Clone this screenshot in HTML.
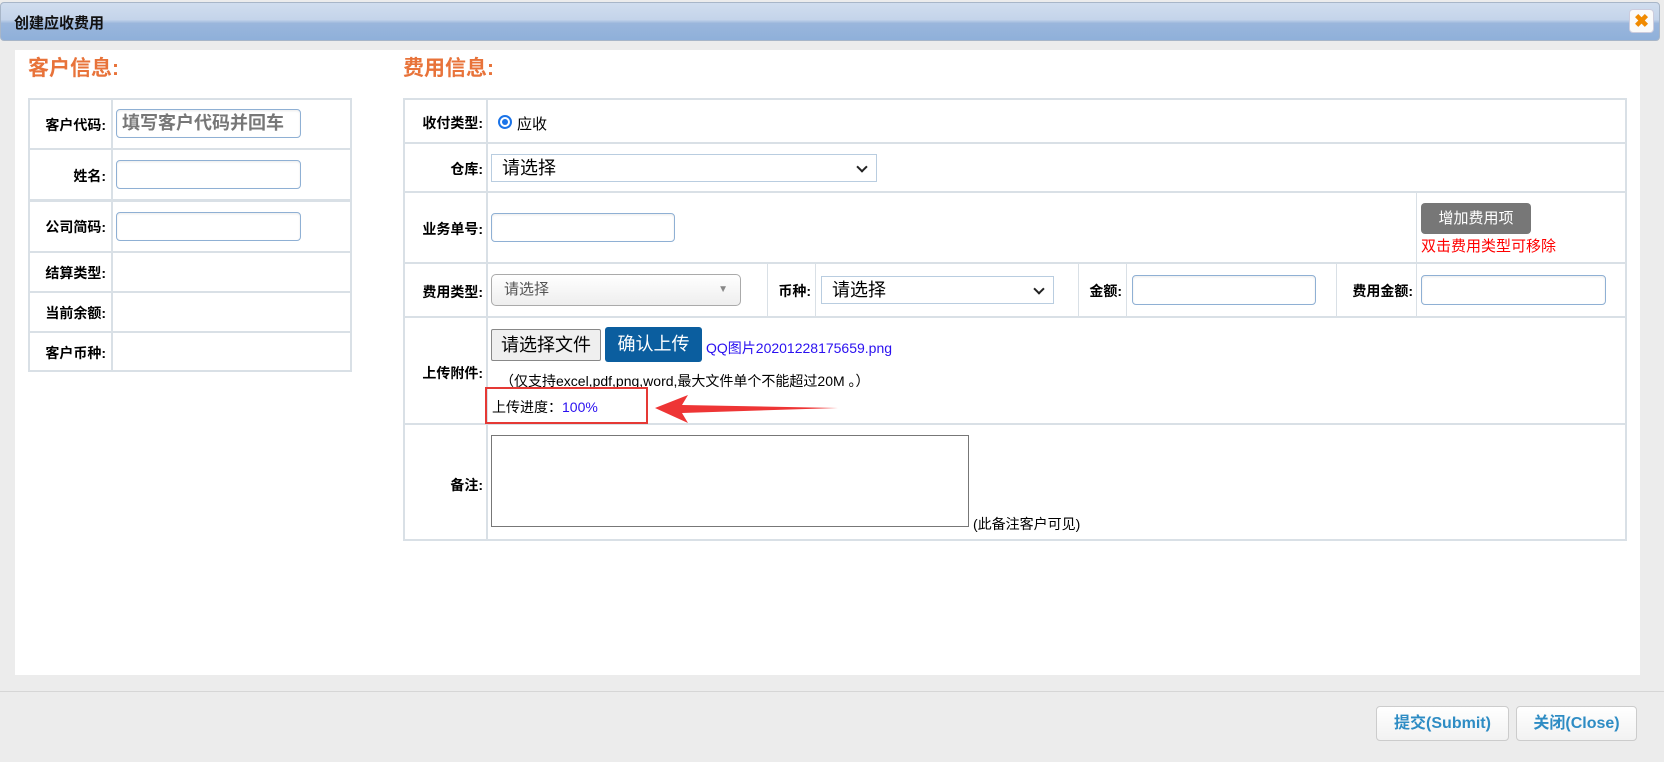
<!DOCTYPE html>
<html><head><meta charset="utf-8"><style>
*{margin:0;padding:0;box-sizing:border-box}
body{width:1664px;height:762px;background:#ececec;font-family:"Liberation Sans","Noto Sans CJK SC",sans-serif;position:relative;overflow:hidden;color:#000}
.a{position:absolute}
.hd{left:0;top:2px;width:1660px;height:39px;border:1px solid #a8b6c8;border-radius:4px;background:linear-gradient(#d0ddee 0%,#c4d4ea 45%,#9ab6dc 55%,#8fb0da 100%)}
.ttl{left:14px;top:12px;font-size:15px;font-weight:bold;color:#111}
.x{left:1629px;top:9px;width:25px;height:24px;background:#fafafa;border:1px solid #ccd;border-radius:4px;color:#f08a00;font-weight:bold;font-size:18px;text-align:center;line-height:22px}
.wh{left:15px;top:50px;width:1625px;height:625px;background:#fff}
.h2{font-size:21px;font-weight:bold;color:#e8733a;top:52px}
.hl{height:2px;background:#d9e0e6}
.vl{width:2px;background:#d9e0e6}
.lb{font-size:14px;font-weight:bold;text-align:right}
.inp{border:1px solid #8fb0d4;border-radius:4px;background:#fff;box-shadow:inset 0 1px 2px rgba(0,0,0,.08)}
.sel{border:1px solid #b9cde0;background:#fff;font-size:18px;padding-left:10px;line-height:26px}
.chev{position:absolute;right:10px;top:8px;width:8px;height:8px;border-right:2px solid #222;border-bottom:2px solid #222;transform:rotate(45deg)}
.btn{border:1px solid #ccc;border-radius:4px;background:linear-gradient(#fff,#f2f2f2);color:#2e8cc4;font-weight:bold;font-size:16px;text-align:center;line-height:33px}
</style></head><body>
<div class="a hd"></div>
<div class="a ttl">创建应收费用</div>
<div class="a x">✖</div>
<div class="a wh"></div>
<div class="a h2" style="left:28px">客户信息:</div>
<div class="a h2" style="left:403px">费用信息:</div>

<!-- left table -->
<div class="a" style="left:28px;top:98px;width:324px;height:274px;border:2px solid #d9e0e6"></div>
<div class="a vl" style="left:111px;top:98px;height:274px"></div>
<div class="a hl" style="left:28px;top:148px;width:324px"></div>
<div class="a hl" style="left:28px;top:199px;width:324px;height:3px"></div>
<div class="a hl" style="left:28px;top:251px;width:324px"></div>
<div class="a hl" style="left:28px;top:291px;width:324px"></div>
<div class="a hl" style="left:28px;top:331px;width:324px"></div>
<div class="a lb" style="left:30px;width:76px;top:115px">客户代码:</div>
<div class="a lb" style="left:30px;width:76px;top:166px">姓名:</div>
<div class="a lb" style="left:30px;width:76px;top:217px">公司简码:</div>
<div class="a lb" style="left:30px;width:76px;top:263px">结算类型:</div>
<div class="a lb" style="left:30px;width:76px;top:303px">当前余额:</div>
<div class="a lb" style="left:30px;width:76px;top:343px">客户币种:</div>
<div class="a inp" style="left:116px;top:109px;width:185px;height:29px;color:#777;font-weight:bold;font-size:18px;padding-left:5px;line-height:26px">填写客户代码并回车</div>
<div class="a inp" style="left:116px;top:160px;width:185px;height:29px"></div>
<div class="a inp" style="left:116px;top:212px;width:185px;height:29px"></div>

<!-- right table -->
<div class="a" style="left:403px;top:98px;width:1224px;height:443px;border:2px solid #d9e0e6"></div>
<div class="a vl" style="left:486px;top:98px;height:443px"></div>
<div class="a hl" style="left:403px;top:142px;width:1224px"></div>
<div class="a hl" style="left:403px;top:191px;width:1224px"></div>
<div class="a hl" style="left:403px;top:262px;width:1224px"></div>
<div class="a hl" style="left:403px;top:316px;width:1224px"></div>
<div class="a hl" style="left:403px;top:423px;width:1224px"></div>
<div class="a vl" style="left:1416px;top:191px;height:126px;width:1px"></div>
<div class="a vl" style="left:767px;top:262px;height:55px;width:1px"></div>
<div class="a vl" style="left:815px;top:262px;height:55px;width:1px"></div>
<div class="a vl" style="left:1078px;top:262px;height:55px;width:1px"></div>
<div class="a vl" style="left:1126px;top:262px;height:55px;width:1px"></div>
<div class="a vl" style="left:1336px;top:262px;height:55px;width:1px"></div>

<div class="a lb" style="left:405px;width:78px;top:113px">收付类型:</div>
<div class="a lb" style="left:405px;width:78px;top:159px">仓库:</div>
<div class="a lb" style="left:405px;width:78px;top:219px">业务单号:</div>
<div class="a lb" style="left:405px;width:78px;top:282px">费用类型:</div>
<div class="a lb" style="left:405px;width:78px;top:363px">上传附件:</div>
<div class="a lb" style="left:405px;width:78px;top:475px">备注:</div>

<div class="a" style="left:498px;top:115px;width:14px;height:14px;border-radius:50%;border:2px solid #1a73e8;background:#fff"><div style="margin:2px;width:6px;height:6px;border-radius:50%;background:#1a73e8"></div></div>
<div class="a" style="left:517px;top:113px;font-size:15px">应收</div>

<div class="a sel" style="left:491px;top:154px;width:386px;height:28px">请选择<span class="chev"></span></div>
<div class="a inp" style="left:491px;top:213px;width:184px;height:29px"></div>
<div class="a" style="left:1421px;top:203px;width:110px;height:31px;background:#777;border-radius:4px;color:#fff;font-size:15px;text-align:center;line-height:31px">增加费用项</div>
<div class="a" style="left:1421px;top:235px;font-size:15px;color:#f00">双击费用类型可移除</div>

<div class="a" style="left:491px;top:274px;width:250px;height:32px;border:1px solid #aaa;border-radius:5px;background:linear-gradient(#fff,#eee);color:#555;font-size:15px;padding-left:12px;line-height:30px">请选择<span style="position:absolute;right:12px;top:0;color:#888;font-size:10px">▼</span></div>
<div class="a lb" style="left:771px;width:40px;top:281px">币种:</div>
<div class="a sel" style="left:821px;top:276px;width:233px;height:28px">请选择<span class="chev"></span></div>
<div class="a lb" style="left:1082px;width:40px;top:281px">金额:</div>
<div class="a inp" style="left:1132px;top:275px;width:184px;height:30px"></div>
<div class="a lb" style="left:1339px;width:74px;top:281px">费用金额:</div>
<div class="a inp" style="left:1421px;top:275px;width:185px;height:30px"></div>

<div class="a" style="left:491px;top:329px;width:110px;height:32px;border:1px solid #888;border-radius:2px;background:#efefef;font-size:18px;text-align:center;line-height:30px">请选择文件</div>
<div class="a" style="left:605px;top:327px;width:97px;height:35px;background:#0b5e9f;border-radius:3px;color:#fff;font-size:18px;text-align:center;line-height:35px">确认上传</div>
<div class="a" style="left:706px;top:338px;font-size:14px;color:#2a10f0">QQ图片20201228175659.png</div>
<div class="a" style="left:500px;top:371px;font-size:14px">（仅支持excel,pdf,png,word,最大文件单个不能超过20M 。）</div>
<div class="a" style="left:485px;top:387px;width:163px;height:37px;border:2px solid #e53935"></div>
<div class="a" style="left:492px;top:397px;font-size:14px">上传进度：<span style="color:#2a10f0">100%</span></div>
<svg class="a" style="left:650px;top:392px" width="200" height="34"><polygon points="5,16 38,3 32,13 188,16 32,21 38,31" fill="#ee3535"/></svg>

<div class="a" style="left:491px;top:435px;width:478px;height:92px;border:1px solid #777;background:#fff"></div>
<div class="a" style="left:973px;top:514px;font-size:14px">(此备注客户可见)</div>

<div class="a" style="left:0;top:691px;width:1664px;height:1px;background:#d6d6d6"></div>
<div class="a btn" style="left:1376px;top:706px;width:133px;height:35px">提交(Submit)</div>
<div class="a btn" style="left:1516px;top:706px;width:121px;height:35px">关闭(Close)</div>
</body></html>
